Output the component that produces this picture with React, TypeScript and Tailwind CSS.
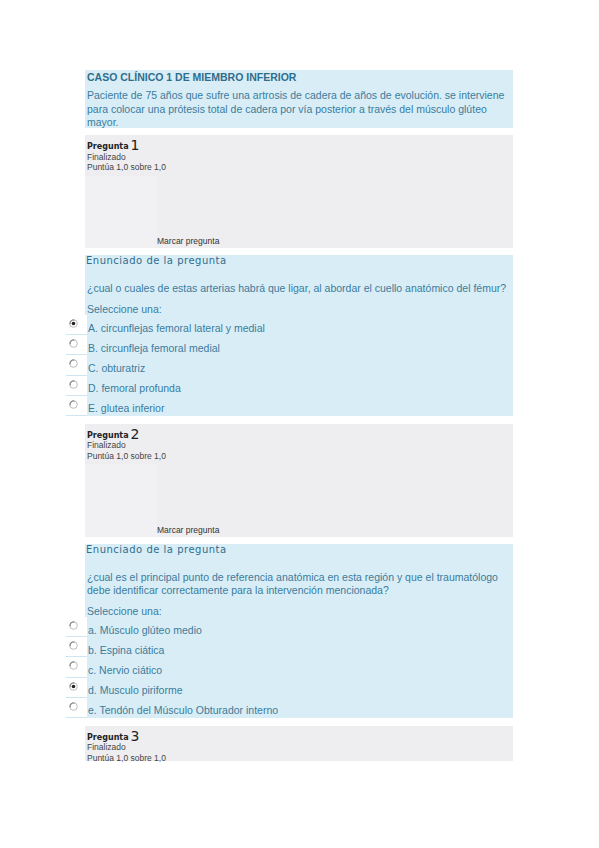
import React from 'react'

const sans = { fontFamily: '"Liberation Sans", Arial, sans-serif' }
const dejavu = { fontFamily: '"DejaVu Sans", "Noto Sans", sans-serif' }

function Radio({ checked }: { checked?: boolean }) {
  return (
    <svg width="9" height="9" viewBox="0 0 9 9">
      <circle cx="4.5" cy="4.5" r="3.8" fill="#fff" stroke="#b5b5b5" strokeWidth="0.9" />
      <path d="M1.2 5.2 A3.4 3.4 0 0 1 5.4 1.1" fill="none" stroke="#666" strokeWidth="0.9" />
      {checked && <circle cx="4.5" cy="4.5" r="1.8" fill="#222" />}
    </svg>
  )
}

function Info({ n, tall }: { n: number; tall?: boolean }) {
  return (
    <div className={`bg-[#eeeef0] flex flex-col ${tall ? 'h-[113px]' : 'h-[35px]'}`}>
      <div className="pl-[2px] pt-[4px] text-[#222]">
        <div className="flex items-end h-[12px] leading-none">
          <span className="text-[8px] font-bold" style={dejavu}>
            Pregunta
          </span>
          <span className="text-[14px] ml-[2px] leading-[12px]" style={dejavu}>
            {n}
          </span>
        </div>
        <div className="text-[8.5px] leading-[10.5px] text-[#444] mt-[0.5px]" style={sans}>
          Finalizado
        </div>
        <div className="text-[8.5px] leading-[10.5px] text-[#444]" style={sans}>
          Puntúa 1,0 sobre 1,0
        </div>
      </div>
      {tall && (
        <div className="flex flex-1 mt-[3px]">
          <div className="w-[72px] bg-[#f1f1f3]" />
          <div className="flex-1 flex items-end pb-[2px]">
            <span className="text-[8.5px] leading-[10px] text-[#333]" style={sans}>
              Marcar pregunta
            </span>
          </div>
        </div>
      )}
    </div>
  )
}

function Question({
  lines,
  options,
  checked,
}: {
  lines: string[]
  options: string[]
  checked: number
}) {
  return (
    <div className="bg-[#d9edf7] text-[#3a7c9c]">
      <div className="pl-[1px] h-[12px] text-[10px] leading-[12px] tracking-[0.5px] text-[#2f6d8c]" style={dejavu}>
        Enunciado de la pregunta
      </div>
      <div className="pl-[2px] mt-[15px] text-[10.5px] leading-[13px]" style={sans}>
        {lines.map((l, i) => (
          <div key={i}>{l}</div>
        ))}
      </div>
      <div className="pl-[2px] mt-[8px] text-[10.5px] leading-[12px]" style={sans}>
        Seleccione una:
      </div>
      <div>
        {options.map((o, i) => (
          <div key={i} className="flex -ml-[19px] h-[20.2px]">
            <div className="w-[21px] h-full bg-white border-b border-[#cfe6f2] pl-[3px] pt-[4px] shrink-0">
              <Radio checked={i === checked} />
            </div>
            <div className="flex items-end pl-[1px] pb-[0.5px] text-[10.5px] leading-[13px]" style={sans}>
              {o}
            </div>
          </div>
        ))}
      </div>
    </div>
  )
}

export default function App() {
  return (
    <div className="w-[599px] min-h-[848px] bg-white">
      <div className="ml-[85px] w-[428px] pt-[70px]">
        <div className="bg-[#d9edf7] h-[58px] pl-[2px] pt-[1px] text-[#3a7c9c]" style={sans}>
          <div className="text-[10.5px] font-bold leading-[13px] text-[#2f6d8c]">
            CASO CLÍNICO 1 DE MIEMBRO INFERIOR
          </div>
          <div className="mt-[5px] text-[10.5px] leading-[13.5px]">
            Paciente de 75 años que sufre una artrosis de cadera de años de evolución. se interviene para colocar una prótesis total de cadera por vía posterior a través del músculo glúteo mayor.
          </div>
        </div>

        <div className="mt-[7px]">
          <Info n={1} tall />
        </div>

        <div className="mt-[7px]">
          <Question
            lines={['¿cual o cuales de estas arterias habrá que ligar, al abordar el cuello anatómico del fémur?']}
            options={[
              'A. circunflejas femoral lateral y medial',
              'B. circunfleja femoral medial',
              'C. obturatriz',
              'D. femoral profunda',
              'E. glutea inferior',
            ]}
            checked={0}
          />
        </div>

        <div className="mt-[8px]">
          <Info n={2} tall />
        </div>

        <div className="mt-[7px]">
          <Question
            lines={[
              '¿cual es el principal punto de referencia anatómica en esta región y que el traumatólogo',
              'debe identificar correctamente para la intervención mencionada?',
            ]}
            options={[
              'a. Músculo glúteo medio',
              'b. Espina ciática',
              'c. Nervio ciático',
              'd. Musculo piriforme',
              'e. Tendón del Músculo Obturador interno',
            ]}
            checked={3}
          />
        </div>

        <div className="mt-[8px]">
          <Info n={3} />
        </div>
      </div>
    </div>
  )
}
